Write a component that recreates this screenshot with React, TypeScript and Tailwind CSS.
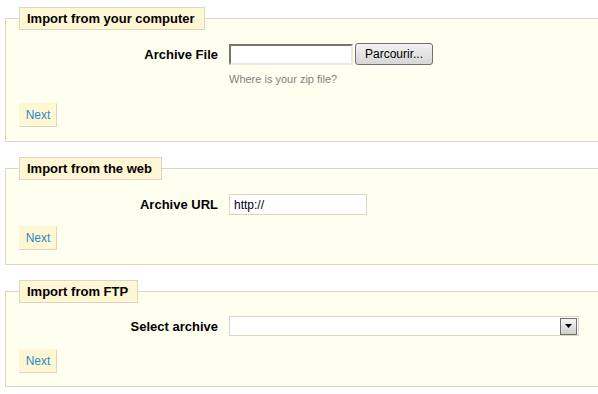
import React from "react";

const Legend = ({ children }: { children: React.ReactNode }) => (
  <legend className="ml-0 border border-[#DFD5C3] bg-[#FFF6D3] pl-[7px] pr-[9px] py-[3px] text-[13px] leading-[15px] font-bold text-black">
    {children}
  </legend>
);

const NextButton = () => (
  <button className="flex h-[24px] w-[38px] items-center justify-center border border-t-[#FFF6D3] border-l-[#FFF6D3] border-r-[#DFD5C3] border-b-[#DFD5C3] bg-[#FFF6D3] text-[12px] leading-[14px] text-[#268CCD]">
    Next
  </button>
);

const Label = ({ children }: { children: React.ReactNode }) => (
  <div className="w-[210px] shrink-0 pr-[11px] text-right text-[13px] leading-[15px] font-bold text-black">
    {children}
  </div>
);

export default function App() {
  return (
    <div
      className="h-[394px] w-[598px] overflow-hidden bg-white pt-[7px]"
      style={{ fontFamily: '"Liberation Sans", Arial, sans-serif' }}
    >
      <div className="ml-[5px] w-[610px]">
        {/* Section 1 */}
        <fieldset className="border border-[#DFD5C3] bg-[#FFFFF0] px-[13px] pb-[14px]">
          <Legend>Import from your computer</Legend>
          <div className="mt-[13px] flex h-[22px] items-center">
            <Label>Archive File</Label>
            <div className="flex items-center">
              <div className="h-[21px] w-[124px] border-2 border-t-[#7c7464] border-l-[#7c7464] border-r-[#ece8e0] border-b-[#ece8e0] bg-white" />
              <div className="ml-[2px] flex h-[22px] w-[78px] items-center justify-center rounded-[3px] border border-[#707070] bg-gradient-to-b from-[#f2f2f2] to-[#d6d6d6] text-[12px] leading-[14px] text-black">
                Parcourir...
              </div>
            </div>
          </div>
          <div className="mt-[8px] pl-[210px] text-[11px] leading-[13px] text-[#7F7F7F]">
            Where is your zip file?
          </div>
          <div className="mt-[17px]">
            <NextButton />
          </div>
        </fieldset>

        {/* Section 2 */}
        <fieldset className="mt-[15px] border border-[#DFD5C3] bg-[#FFFFF0] px-[13px] pb-[14px]">
          <Legend>Import from the web</Legend>
          <div className="mt-[14px] flex h-[21px] items-center">
            <Label>Archive URL</Label>
            <div className="flex h-[21px] w-[138px] items-center border border-[#DFD5C3] bg-white pl-[4px] text-[12px] leading-[14px] text-[#000022]">
              http://
            </div>
          </div>
          <div className="mt-[11px]">
            <NextButton />
          </div>
        </fieldset>

        {/* Section 3 */}
        <fieldset className="mt-[15px] border border-[#DFD5C3] bg-[#FFFFF0] px-[13px] pb-[13px]">
          <Legend>Import from FTP</Legend>
          <div className="mt-[13px] flex h-[20px] items-center">
            <Label>Select archive</Label>
            <div className="flex h-[20px] w-[350px] items-center justify-end border border-[#DFD5C3] bg-white pr-[1px]">
              <div className="flex h-[17px] w-[17px] items-center justify-center border border-[#6f6f6f] bg-gradient-to-b from-[#f4f4f4] to-[#d0d0d0]">
                <svg width="7" height="4" viewBox="0 0 7 4">
                  <polygon points="0,0 7,0 3.5,4" fill="#000" />
                </svg>
              </div>
            </div>
          </div>
          <div className="mt-[13px]">
            <NextButton />
          </div>
        </fieldset>
      </div>
    </div>
  );
}
